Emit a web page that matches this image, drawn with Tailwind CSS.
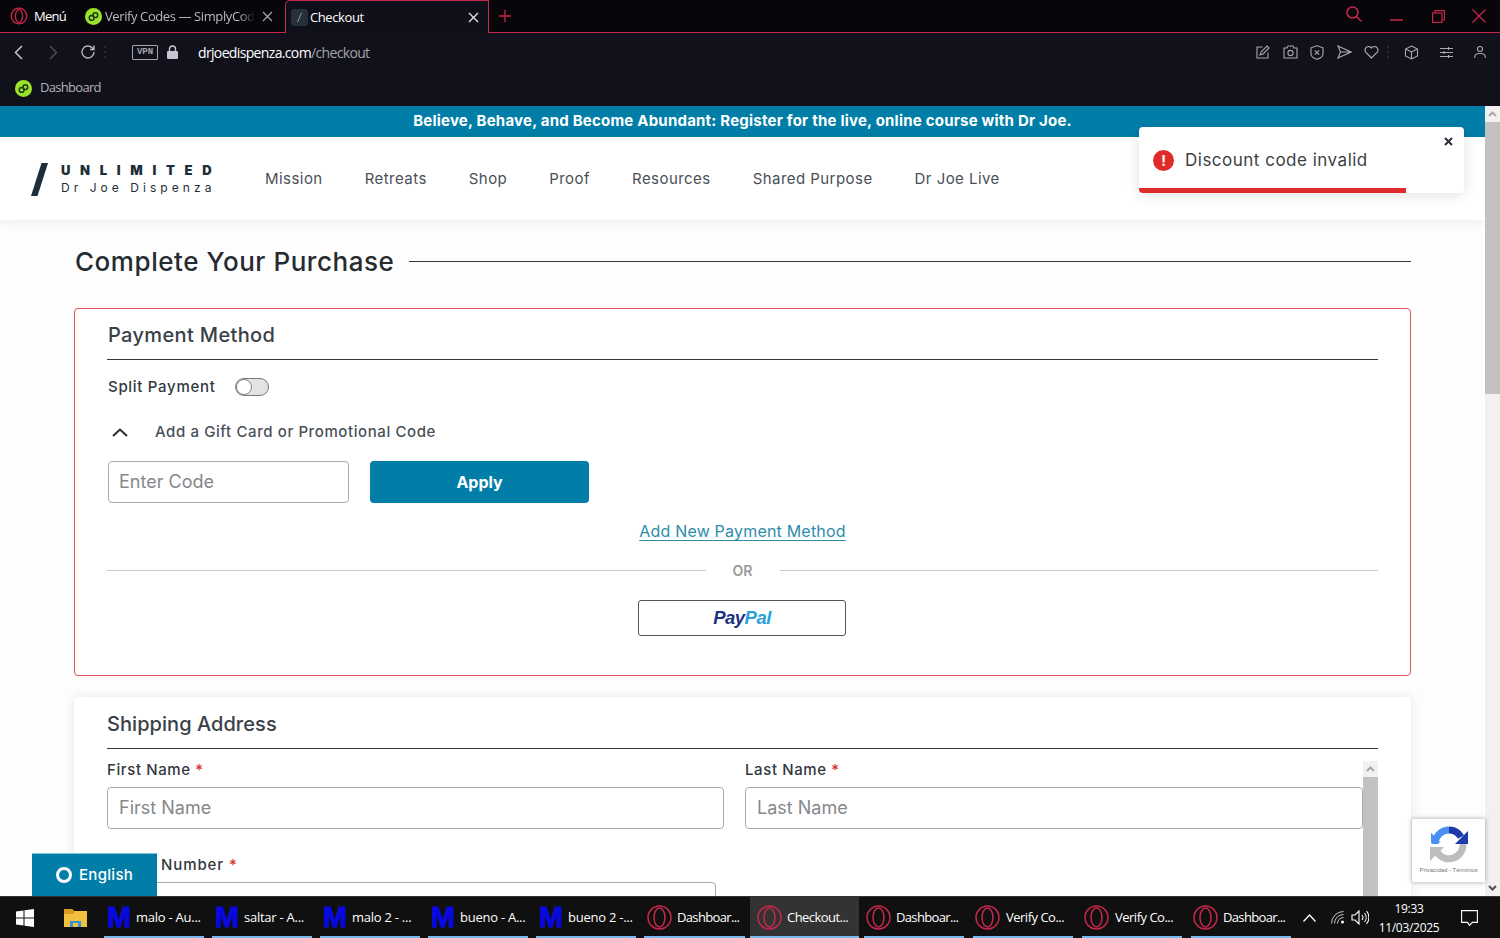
<!DOCTYPE html>
<html lang="en">
<head>
    <meta charset="UTF-8">
    <title>Checkout</title>
    <script src="https://cdn.jsdelivr.net/npm/@tailwindcss/browser@4"></script>
</head>
<body class="h-[938px] w-[1500px] overflow-hidden flex flex-col bg-white font-['Inter',sans-serif] text-[#33383f]">

    <!-- tabs -->
    <div class="h-[33px] flex items-center bg-[#07070b] border-b border-[#c8264a] text-[13px] tracking-[-0.4px] font-['Open_Sans',sans-serif] relative shrink-0">
        <svg class="ml-[10px] w-[18px] h-[18px]" viewBox="0 0 18 18" fill="none" stroke="#c8264a" stroke-width="1.3"><circle cx="9" cy="9" r="7.8"/><ellipse cx="9" cy="9" rx="3.6" ry="6.4"/></svg>
        <span class="ml-[6px] mt-[2px] w-[51px] text-white font-medium tracking-[-0.7px]">Menú</span>
        <div class="w-[17px] h-[17px] rounded-full bg-[#9be22d] flex items-center justify-center">
            <svg class="w-[11px] h-[11px]" viewBox="0 0 12 12" fill="none" stroke="#1c3b10" stroke-width="1.6"><circle cx="4" cy="7.5" r="2.6"/><circle cx="8" cy="4.5" r="2.6"/></svg>
        </div>
        <span class="ml-[3px] mt-[2px] w-[150px] overflow-hidden whitespace-nowrap text-[#b9b9c0] [mask-image:linear-gradient(to_right,black_90%,transparent)]">Verify Codes — SimplyCode</span>
        <svg class="ml-[7px] w-[11px] h-[11px]" viewBox="0 0 11 11" stroke="#a5a5ad" stroke-width="1.2"><path d="M1 1l9 9M10 1l-9 9"/></svg>
        <!-- active tab -->
        <div class="ml-[12px] w-[204px] h-[33px] bg-[#10101a] border-x border-t border-[#c8264a] rounded-tl-[5px] flex items-center mt-[1px]">
            <div class="ml-[5px] w-[17px] h-[17px] rounded-[3px] bg-[#25303a] flex items-center justify-center">
                <svg class="w-[11px] h-[11px]" viewBox="0 0 11 11" stroke="#8a97a2" stroke-width="1"><path d="M7.5 1L3.5 10"/></svg>
            </div>
            <span class="ml-[2px] mt-[1px] text-white font-medium">Checkout</span>
            <svg class="ml-auto mr-[9px] w-[11px] h-[11px]" viewBox="0 0 11 11" stroke="#e6e6ea" stroke-width="1.3"><path d="M1 1l9 9M10 1l-9 9"/></svg>
        </div>
        <svg class="ml-[10px] w-[12px] h-[12px]" viewBox="0 0 12 12" stroke="#c8264a" stroke-width="1.3"><path d="M6 0v12M0 6h12"/></svg>
        <svg class="ml-auto mt-[-4px] w-[18px] h-[18px]" viewBox="0 0 18 18" fill="none" stroke="#c8264a" stroke-width="1.5"><circle cx="7.5" cy="7.5" r="5.5"/><path d="M11.5 11.5l5 5"/></svg>
        <svg class="ml-[27px] mt-[8px] w-[13px] h-[2px]" viewBox="0 0 13 2"><path d="M0 1h13" stroke="#c8264a" stroke-width="1.5"/></svg>
        <svg class="ml-[29px] w-[13px] h-[13px]" viewBox="0 0 13 13" fill="none" stroke="#c8264a" stroke-width="1.2"><rect x=".6" y="3" width="9.4" height="9.4"/><path d="M3 3V.6h9.4V10H10"/></svg>
        <svg class="ml-[27px] mr-[14px] w-[14px] h-[14px]" viewBox="0 0 14 14" stroke="#c8264a" stroke-width="1.3"><path d="M.5.5l13 13M13.5.5l-13 13"/></svg>
    </div>

    <!-- address bar -->
    <div class="h-[37px] flex items-center bg-[#10111a] shrink-0 pt-[1px]">
        <svg class="ml-[14px] w-[9px] h-[15px]" viewBox="0 0 9 15" fill="none" stroke="#c4c4cc" stroke-width="1.5"><path d="M8 1L1.5 7.5 8 14"/></svg>
        <svg class="ml-[26px] w-[9px] h-[15px]" viewBox="0 0 9 15" fill="none" stroke="#4b4b55" stroke-width="1.5"><path d="M1 1l6.5 6.5L1 14"/></svg>
        <svg class="ml-[22px] w-[16px] h-[16px]" viewBox="0 0 16 16" fill="none" stroke="#b4b4bc" stroke-width="1.4"><path d="M14 8a6 6 0 1 1-1.8-4.3L14 5.5M14 1.5v4h-4"/></svg>
        <svg class="ml-[8px] w-[2px] h-[12px]" viewBox="0 0 2 12" fill="#33333c"><circle cx="1" cy="1" r="1"/><circle cx="1" cy="6" r="1"/><circle cx="1" cy="11" r="1"/></svg>
        <span class="ml-[26px] w-[26px] h-[15px] border border-[#a4a4ac] rounded-[1px] text-[#a4a4ac] text-[9px] leading-[13px] text-center font-['Liberation_Mono',monospace] font-bold">VPN</span>
        <svg class="ml-[9px] w-[11px] h-[14px]" viewBox="0 0 11 14"><path d="M2.5 6V4a3 3 0 0 1 6 0v2" fill="none" stroke="#c8c2d4" stroke-width="1.4"/><rect y="6" width="11" height="8" rx="1.2" fill="#c8c2d4"/></svg>
        <span class="ml-[20px] text-[14px] tracking-[-0.65px] font-['Open_Sans',sans-serif] text-white">drjoedispenza.com<span class="text-[#a3a3ab]">/checkout</span></span>
        <div class="ml-auto flex items-center text-[#a9a9b2]">
            <svg class="w-[14px] h-[14px]" viewBox="0 0 14 14" fill="none" stroke="currentColor" stroke-width="1.1"><path d="M6.5 2H1v11h11V7.5"/><path d="M4 10l1-3 6-6 2 2-6 6-3 1z"/></svg>
            <svg class="ml-[13px] w-[15px] h-[14px]" viewBox="0 0 15 14" fill="none" stroke="currentColor" stroke-width="1.1"><path d="M1 3h3l1-2h5l1 2h3v10H1z"/><circle cx="7.5" cy="8" r="2.6"/></svg>
            <svg class="ml-[12px] w-[14px] h-[15px]" viewBox="0 0 14 15" fill="none" stroke="currentColor" stroke-width="1.1"><path d="M7 .8l6 2v6.2c0 2.500-3 4.300-6 5.200-3-.9-6-2.700-6-5.200V2.800z"/><path d="M4.800 5.300l4.400 4.400M9.200 5.300L4.800 9.700"/></svg>
            <svg class="ml-[13px] w-[15px] h-[14px]" viewBox="0 0 15 14" fill="none" stroke="currentColor" stroke-width="1.1"><path d="M1 1l13 6-13 6 2.500-6zM3.500 7H14"/></svg>
            <svg class="ml-[12px] w-[15px] h-[14px]" viewBox="0 0 15 14" fill="none" stroke="currentColor" stroke-width="1.2"><path d="M7.500 13L1.700 7.200A3.500 3.500 0 0 1 7.500 3a3.500 3.500 0 0 1 5.800 4.200z"/></svg>
            <svg class="ml-[8px] w-[2px] h-[12px]" viewBox="0 0 2 12" fill="#33333c"><circle cx="1" cy="1" r="1"/><circle cx="1" cy="6" r="1"/><circle cx="1" cy="11" r="1"/></svg>
            <svg class="ml-[15px] w-[15px] h-[15px]" viewBox="0 0 15 15" fill="none" stroke="currentColor" stroke-width="1.1"><path d="M7.500 1l6 3v7l-6 3-6-3V4zM1.500 4l6 3 6-3M7.500 7v7"/></svg>
            <svg class="ml-[21px] w-[13px] h-[13px]" viewBox="0 0 13 13" fill="none" stroke="currentColor" stroke-width="1.1"><path d="M0 2.500h13M0 6.500h13M0 10.500h13"/><path d="M8.500 1v3M4 5v3M8.500 9v3"/></svg>
            <svg class="ml-[21px] mr-[14px] w-[12px] h-[14px]" viewBox="0 0 12 14" fill="none" stroke="currentColor" stroke-width="1.1"><circle cx="6" cy="4" r="2.500"/><path d="M.8 13v-1.500C.8 9.500 3 8.500 6 8.500s5.200 1 5.200 3V13"/></svg>
        </div>
    </div>

    <!-- bookmarks -->
    <div class="h-[36px] flex items-center bg-[#10111a] shrink-0 text-[13px] tracking-[-0.7px] font-['Open_Sans',sans-serif] text-[#b4b0bc]">
        <div class="ml-[15px] w-[17px] h-[17px] rounded-full bg-[#9be22d] flex items-center justify-center">
            <svg class="w-[11px] h-[11px]" viewBox="0 0 12 12" fill="none" stroke="#1c3b10" stroke-width="1.6"><circle cx="4" cy="7.500" r="2.600"/><circle cx="8" cy="4.500" r="2.600"/></svg>
        </div>
        <span class="ml-[8px]">Dashboard</span>
    </div>

    <!-- viewport -->
    <div class="relative flex-1 flex min-h-0">
        <div class="flex-1 min-w-0 overflow-hidden bg-[#fdfdfd]">
            <div class="h-[31px] bg-[#007ea8] text-white text-[15px] font-bold tracking-[0.22px] text-center leading-[29px]">Believe, Behave, and Become Abundant: Register for the live, online course with Dr Joe.</div>

            <header class="h-[83px] bg-white shadow-[0_2px_10px_rgba(0,0,0,0.08)] flex items-center pl-[31px]">
                <svg class="w-[17px] h-[33px] mt-[1px]" viewBox="0 0 17 33"><path d="M10.500 0H17L6.500 33H0z" fill="#1e2e38"/></svg>
                <div class="ml-[13px] w-[170px] text-[#1e2e38]">
                    <div class="text-[13px] leading-[15px] font-black tracking-[9.7px] whitespace-nowrap">UNLIMITED</div>
                    <div class="text-[12px] leading-[15px] mt-[2px] tracking-[4.05px] whitespace-nowrap">Dr Joe Dispenza</div>
                </div>
                <nav class="ml-[34px] mt-[2px] flex gap-[42px] text-[15px] tracking-[0.45px] text-[#4a4f57]">
                    <span>Mission</span><span>Retreats</span><span>Shop</span><span>Proof</span><span>Resources</span><span>Shared Purpose</span><span>Dr Joe Live</span>
                </nav>
            </header>

            <main class="px-[74px]">
                <div class="h-[82px] flex items-center">
                    <h1 class="text-[26px] font-medium tracking-[0.55px] text-[#262b31] whitespace-nowrap pl-[1px]">Complete Your Purchase</h1>
                    <div class="ml-[15px] flex-1 h-px bg-[#333a42]"></div>
                </div>

                <!-- payment -->
                <section class="mt-[6px] h-[368px] border border-[#e05252] rounded-[4px] bg-white px-[32px]">
                    <h2 class="h-[51px] pl-[1px] leading-[53px] text-[20px] font-medium tracking-[0.35px] text-[#3a4047] border-b border-[#333a42]">Payment Method</h2>
                    <div class="mt-[18px] pl-[1px] flex items-center h-[18px]">
                        <span class="text-[15px] font-medium tracking-[0.7px]">Split Payment</span>
                        <div class="ml-[20px] w-[34px] h-[18px] rounded-full bg-[#e3e3e3] border border-[#777] relative">
                            <div class="w-[16px] h-[16px] rounded-full bg-white border border-[#888]"></div>
                        </div>
                    </div>
                    <div class="mt-[27px] flex items-center h-[18px]">
                        <svg class="ml-[5px] w-[16px] h-[9px]" viewBox="0 0 16 9" fill="none" stroke="#262b31" stroke-width="2"><path d="M1 8l7-6.500L15 8"/></svg>
                        <span class="ml-[27px] text-[15px] font-medium tracking-[0.6px] text-[#4a4f57]">Add a Gift Card or Promotional Code</span>
                    </div>
                    <div class="mt-[20px] pl-[1px] flex gap-[21px]">
                        <div class="w-[241px] h-[42px] border border-[#aaa] rounded-[4px] pl-[10px] text-[18px] leading-[40px] text-[#85888c]">Enter Code</div>
                        <button class="w-[219px] h-[42px] rounded-[4px] bg-[#007ea8] text-white text-[16px] font-bold">Apply</button>
                    </div>
                    <div class="mt-[18px] text-center leading-[20px]">
                        <a class="text-[16px] tracking-[0.2px] text-[#2f8cab] underline underline-offset-[3px]">Add New Payment Method</a>
                    </div>
                    <div class="mt-[19px] flex items-center">
                        <div class="flex-1 h-px bg-[#c8c8c8]"></div>
                        <span class="w-[74px] text-center text-[14px] font-semibold text-[#999]">OR</span>
                        <div class="flex-1 h-px bg-[#c8c8c8]"></div>
                    </div>
                    <div class="mt-[19px] ml-[531px] w-[208px] h-[36px] border border-[#555] rounded-[3px] flex items-center justify-center text-[18.5px] font-bold italic font-['Liberation_Sans',sans-serif] tracking-[-0.5px]">
                        <span class="text-[#1b3280]">Pay</span><span class="text-[#2a9fdc]">Pal</span>
                    </div>
                </section>

                <!-- shipping -->
                <section class="mt-[21px] h-[300px] rounded-[4px] bg-white shadow-[0_0_10px_rgba(0,0,0,0.1)] pl-[33px] pr-[33px]">
                    <h2 class="h-[52px] pt-[12px] leading-[30px] text-[20px] font-medium tracking-[0.05px] text-[#3a4047] border-b border-[#333a42]">Shipping Address</h2>
                    <div class="flex mt-[1px]">
                        <div class="flex-1 min-w-0">
                            <div class="grid grid-cols-[617px_1fr] gap-x-[21px] mt-[11px]">
                                <div>
                                    <div class="text-[15px] font-medium leading-[18px] tracking-[0.6px]">First Name <span class="text-[#e03030]">*</span></div>
                                    <div class="mt-[8px] h-[42px] border border-[#aaa] rounded-[4px] pl-[11px] text-[18px] leading-[40px] text-[#85888c]">First Name</div>
                                </div>
                                <div>
                                    <div class="text-[15px] font-medium leading-[18px] tracking-[0.6px]">Last Name <span class="text-[#e03030]">*</span></div>
                                    <div class="mt-[8px] h-[42px] border border-[#aaa] rounded-[4px] pl-[11px] text-[18px] leading-[40px] text-[#85888c]">Last Name</div>
                                </div>
                            </div>
                            <div class="mt-[27px] pl-[54px] text-[15px] font-medium leading-[18px] tracking-[0.9px]">Number <span class="text-[#e03030]">*</span></div>
                            <div class="mt-[8px] w-[609px] h-[42px] border border-[#aaa] rounded-[4px]"></div>
                        </div>
                        <div class="w-[15px] h-[140px] mt-[11px] bg-[#f1f1f1] shrink-0">
                            <div class="h-[16px] flex items-center justify-center"><svg class="w-[9px] h-[6px]" viewBox="0 0 9 6" fill="none" stroke="#a8a8a8" stroke-width="2"><path d="M1 5l3.500-3.500L8 5"/></svg></div>
                            <div class="h-[124px] bg-[#c1c1c1]"></div>
                        </div>
                    </div>
                </section>
            </main>
        </div>

        <!-- page scrollbar -->
        <div class="w-[15px] shrink-0 bg-[#f1f1f1] flex flex-col">
            <div class="h-[16px] flex items-center justify-center"><svg class="w-[9px] h-[6px]" viewBox="0 0 9 6" fill="none" stroke="#a8a8a8" stroke-width="2"><path d="M1 5l3.500-3.500L8 5"/></svg></div>
            <div class="h-[272px] bg-[#c1c1c1]"></div>
            <div class="mt-auto h-[16px] flex items-center justify-center"><svg class="w-[9px] h-[6px]" viewBox="0 0 9 6" fill="none" stroke="#505050" stroke-width="2"><path d="M1 1l3.500 3.500L8 1"/></svg></div>
        </div>

        <!-- toast -->
        <div class="absolute left-[1139px] top-[21px] w-[325px] h-[66px] bg-white rounded-[4px] shadow-[0_2px_14px_rgba(0,0,0,0.12)] overflow-hidden flex items-center">
            <div class="ml-[14px] w-[21px] h-[21px] rounded-full bg-[#e02b2b] text-white text-[14px] font-bold leading-[21px] text-center">!</div>
            <span class="ml-[11px] mt-[1px] text-[17px] text-[#3a3f45] tracking-[0.5px]">Discount code invalid</span>
            <svg class="absolute right-[11px] top-[10px] w-[9px] h-[9px]" viewBox="0 0 9 9" stroke="#2a3038" stroke-width="2"><path d="M1 1l7 7M8 1L1 8"/></svg>
            <div class="absolute left-0 bottom-0 w-[267px] h-[5px] bg-[#e02b2b]"></div>
        </div>

        <!-- language -->
        <div class="absolute left-[32px] bottom-0 w-[125px] h-[43px] bg-[#007ea8] border-t border-[#7ec4dc] flex items-center text-white text-[15px] font-medium tracking-[0.3px]">
            <div class="ml-[24px] w-[16px] h-[16px] rounded-full border-[3px] border-white"></div>
            <span class="ml-[7px]">English</span>
        </div>

        <!-- recaptcha -->
        <div class="absolute left-[1412px] top-[713px] w-[73px] h-[63px] bg-white rounded-l-[2px] shadow-[0_0_5px_rgba(0,0,0,0.35)] flex flex-col items-center">
            <svg class="mt-[6px] w-[38px] h-[38px]" viewBox="0 0 38 38" fill="none" stroke-width="7">
                <path d="M5 19a14 14 0 0 1 14-14" stroke="#4a90f0"/>
                <path d="M19 5a14 14 0 0 1 12 7" stroke="#1c3aa9"/>
                <path d="M33 19a14 14 0 0 1-26 8" stroke="#bdbdbd"/>
                <path d="M0 3v16h16z" fill="#4a90f0" stroke="none" transform="translate(1 6) scale(.6)"/>
                <path d="M38 6v13H25z" fill="#1c3aa9" stroke="none"/>
                <path d="M0 36V22h14z" fill="#bdbdbd" stroke="none"/>
            </svg>
            <span class="mt-[3px] text-[6px] leading-[8px] text-[#777] font-['Liberation_Sans',sans-serif] whitespace-nowrap">Privacidad - Términos</span>
        </div>
    </div>

    <!-- taskbar -->
    <div class="h-[42px] shrink-0 bg-[#101010] border-t border-[#333] flex text-white text-[13px] tracking-[-0.25px] font-['Open_Sans',sans-serif]">
        <div class="w-[50px] flex items-center justify-center">
            <svg class="w-[18px] h-[18px]" viewBox="0 0 18 18" fill="#fff"><path d="M0 2.500L7.500 1.400V8.500H0zM8.500 1.300L18 0V8.500H8.500zM0 9.500H7.500V16.600L0 15.500zM8.500 9.500H18V18L8.500 16.700z"/></svg>
        </div>
        <div class="w-[50px] flex items-center justify-center">
            <svg class="w-[23px] h-[20px]" viewBox="0 0 23 20"><path d="M0 1h8l2 2h13v16H0z" fill="#f0c040"/><path d="M0 1h8l2 2v3H0z" fill="#d89a20"/><path d="M6 13h11v6H6z" fill="#3d8fd0"/><path d="M9 15h5v4H9z" fill="#f0c040"/></svg>
        </div>

        <div class="w-[108px] px-[4px] relative flex items-center"><span class="ml-[3px] w-[22px] text-[29px] font-black text-[#0808e0] [-webkit-text-stroke:1px_#0808e0] font-['Liberation_Sans',sans-serif] tracking-normal">M</span><span class="ml-[7px]">malo - Au...</span><div class="absolute left-[4px] right-[4px] bottom-0 h-[2px] bg-[#76b9ed]"></div></div>
        <div class="w-[108px] px-[4px] relative flex items-center"><span class="ml-[3px] w-[22px] text-[29px] font-black text-[#0808e0] [-webkit-text-stroke:1px_#0808e0] font-['Liberation_Sans',sans-serif] tracking-normal">M</span><span class="ml-[7px]">saltar - A...</span><div class="absolute left-[4px] right-[4px] bottom-0 h-[2px] bg-[#76b9ed]"></div></div>
        <div class="w-[108px] px-[4px] relative flex items-center"><span class="ml-[3px] w-[22px] text-[29px] font-black text-[#0808e0] [-webkit-text-stroke:1px_#0808e0] font-['Liberation_Sans',sans-serif] tracking-normal">M</span><span class="ml-[7px]">malo 2 - ...</span><div class="absolute left-[4px] right-[4px] bottom-0 h-[2px] bg-[#76b9ed]"></div></div>
        <div class="w-[108px] px-[4px] relative flex items-center"><span class="ml-[3px] w-[22px] text-[29px] font-black text-[#0808e0] [-webkit-text-stroke:1px_#0808e0] font-['Liberation_Sans',sans-serif] tracking-normal">M</span><span class="ml-[7px]">bueno - A...</span><div class="absolute left-[4px] right-[4px] bottom-0 h-[2px] bg-[#76b9ed]"></div></div>
        <div class="w-[108px] px-[4px] relative flex items-center"><span class="ml-[3px] w-[22px] text-[29px] font-black text-[#0808e0] [-webkit-text-stroke:1px_#0808e0] font-['Liberation_Sans',sans-serif] tracking-normal">M</span><span class="ml-[7px]">bueno 2 -...</span><div class="absolute left-[4px] right-[4px] bottom-0 h-[2px] bg-[#76b9ed]"></div></div>

        <div class="w-[110px] pl-[7px] relative flex items-center">
            <svg class="w-[25px] h-[25px]" viewBox="0 0 25 25" fill="none" stroke="#c8264a" stroke-width="1.500"><circle cx="12.500" cy="12.500" r="11.500"/><ellipse cx="12.500" cy="12.500" rx="5.500" ry="9.500"/></svg>
            <span class="ml-[5px] tracking-[-0.65px]">Dashboar...</span><div class="absolute left-[4px] right-[5px] bottom-0 h-[2px] bg-[#76b9ed]"></div>
        </div>
        <div class="w-[109px] pl-[7px] relative flex items-center bg-[#333]">
            <svg class="w-[25px] h-[25px]" viewBox="0 0 25 25" fill="none" stroke="#c8264a" stroke-width="1.500"><circle cx="12.500" cy="12.500" r="11.500"/><ellipse cx="12.500" cy="12.500" rx="5.500" ry="9.500"/></svg>
            <span class="ml-[5px] tracking-[-0.55px]">Checkout...</span><div class="absolute left-0 right-0 bottom-0 h-[2px] bg-[#76b9ed]"></div>
        </div>
        <div class="w-[109px] pl-[7px] relative flex items-center">
            <svg class="w-[25px] h-[25px]" viewBox="0 0 25 25" fill="none" stroke="#c8264a" stroke-width="1.500"><circle cx="12.500" cy="12.500" r="11.500"/><ellipse cx="12.500" cy="12.500" rx="5.500" ry="9.500"/></svg>
            <span class="ml-[5px] tracking-[-0.65px]">Dashboar...</span><div class="absolute left-[5px] right-[4px] bottom-0 h-[2px] bg-[#76b9ed]"></div>
        </div>
        <div class="w-[109px] pl-[7px] relative flex items-center">
            <svg class="w-[25px] h-[25px]" viewBox="0 0 25 25" fill="none" stroke="#c8264a" stroke-width="1.500"><circle cx="12.500" cy="12.500" r="11.500"/><ellipse cx="12.500" cy="12.500" rx="5.500" ry="9.500"/></svg>
            <span class="ml-[6px] tracking-[-0.5px]">Verify Co...</span><div class="absolute left-[5px] right-[4px] bottom-0 h-[2px] bg-[#76b9ed]"></div>
        </div>
        <div class="w-[109px] pl-[7px] relative flex items-center">
            <svg class="w-[25px] h-[25px]" viewBox="0 0 25 25" fill="none" stroke="#c8264a" stroke-width="1.500"><circle cx="12.500" cy="12.500" r="11.500"/><ellipse cx="12.500" cy="12.500" rx="5.500" ry="9.500"/></svg>
            <span class="ml-[6px] tracking-[-0.5px]">Verify Co...</span><div class="absolute left-[5px] right-[4px] bottom-0 h-[2px] bg-[#76b9ed]"></div>
        </div>
        <div class="w-[109px] pl-[7px] relative flex items-center">
            <svg class="w-[25px] h-[25px]" viewBox="0 0 25 25" fill="none" stroke="#c8264a" stroke-width="1.500"><circle cx="12.500" cy="12.500" r="11.500"/><ellipse cx="12.500" cy="12.500" rx="5.500" ry="9.500"/></svg>
            <span class="ml-[5px] tracking-[-0.65px]">Dashboar...</span><div class="absolute left-[5px] right-[4px] bottom-0 h-[2px] bg-[#76b9ed]"></div>
        </div>

        <!-- tray -->
        <div class="flex-1 flex items-center">
            <svg class="ml-[8px] w-[13px] h-[8px]" viewBox="0 0 13 8" fill="none" stroke="#fff" stroke-width="1.300"><path d="M.5 7.500l6-6.500 6 6.500"/></svg>
            <svg class="ml-[15px] w-[14px] h-[13px]" viewBox="0 0 14 13" fill="none" stroke="#c8c8c8"><path d="M.5 12.500A12 12 0 0 1 12.500.5M3.500 12.500a9 9 0 0 1 9-9M6.500 12.500a6 6 0 0 1 6-6"/><circle cx="11.500" cy="11" r="1.500" fill="#fff" stroke="none"/></svg>
            <svg class="ml-[6px] w-[18px] h-[15px]" viewBox="0 0 18 15" fill="none" stroke="#fff" stroke-width="1.100"><path d="M1 5h3l4-4v13l-4-4H1zM11 5a4 4 0 0 1 0 5M13.500 3a7 7 0 0 1 0 9M15.500 1a10 10 0 0 1 0 13"/></svg>
            <div class="ml-[9px] w-[62px] text-center text-[12px] leading-[19px] tracking-[-0.3px]">19:33<br>11/03/2025</div>
            <svg class="ml-[21px] w-[17px] h-[16px]" viewBox="0 0 17 16" fill="none" stroke="#fff" stroke-width="1.100"><path d="M.6.6h15.800v11.800h-5l-3 3-1.800-3H.6z"/></svg>
        </div>
    </div>
</body>
</html>
